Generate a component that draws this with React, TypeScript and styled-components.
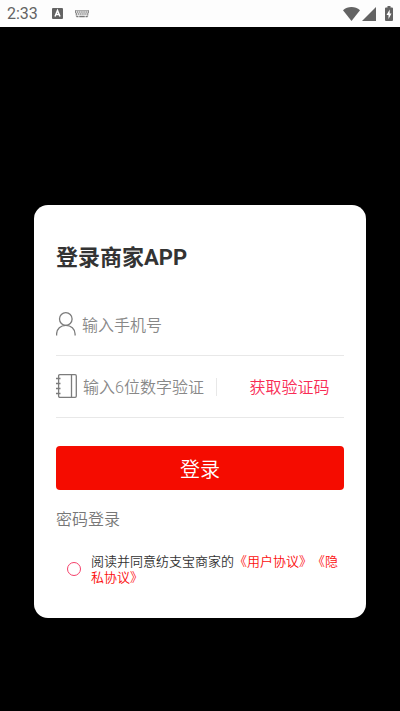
import React, { useState } from "react";
import styled, { createGlobalStyle } from "styled-components";

const GlobalStyle = createGlobalStyle`
  *, *::before, *::after { box-sizing: border-box; }
  body {
    margin: 0;
    background: #000;
    font-family: Roboto, "Noto Sans CJK SC", sans-serif;
    color: #333;
  }
  button, input { font-family: inherit; }
`;

const Screen = styled.div`
  min-height: 100vh;
  display: flex;
  flex-direction: column;
  background: #000;
`;

const StatusBar = styled.header`
  height: 27px;
  padding: 0 7px;
  display: flex;
  align-items: center;
  justify-content: space-between;
  background: #fdfdfd;
  color: #636363;
`;

const StatusGroup = styled.div<{ $gap: number }>`
  display: flex;
  align-items: center;
  gap: ${({ $gap }) => $gap}px;
`;

const Clock = styled.time`
  width: 33px;
  padding-top: 1px;
  font-size: 16px;
  line-height: 28px;
`;

const Card = styled.main`
  margin: 178px 34px 0;
  padding: 37px 22px 32px;
  border-radius: 14px;
  background: #fff;
`;

const Title = styled.h1`
  margin: 0 0 20px;
  font-size: 22px;
  line-height: 32px;
  font-weight: 700;
`;

const Field = styled.div`
  height: 62px;
  display: flex;
  align-items: center;
  gap: 6px;
  border-bottom: 1px solid #e8e8e8;
`;

const FieldLabel = styled.label`
  display: flex;
  flex: none;
  padding-bottom: 2px;
`;

const TextInput = styled.input`
  flex: 1;
  min-width: 0;
  height: 32px;
  padding: 2px 0 0;
  border: 0;
  outline: 0;
  background: transparent;
  color: #333;
  font-size: 16px;
  font-weight: 350;
  &::placeholder { color: #888; opacity: 1; }
`;

const CodeButton = styled.button`
  flex: none;
  height: 18px;
  width: 128px;
  padding: 0 0 0 18px;
  border: 0;
  border-left: 1px solid #e8e8e8;
  background: transparent;
  color: #f92c55;
  font-size: 16px;
  font-weight: 350;
  line-height: 20px;
`;

const SubmitButton = styled.button`
  display: block;
  width: 100%;
  height: 44px;
  margin-top: 28px;
  padding: 0;
  border: 0;
  border-radius: 4px;
  background: #f50c00;
  color: #fff;
  font-size: 20px;
  font-weight: 350;
`;

const ModeButton = styled.button`
  display: block;
  margin-top: 18px;
  padding: 0;
  border: 0;
  background: transparent;
  color: #777;
  font-size: 16px;
  font-weight: 350;
  line-height: 24px;
`;

const Agreement = styled.div`
  margin-top: 22px;
  padding-left: 11px;
  display: flex;
  align-items: flex-start;
  gap: 10px;
`;

const AgreeBox = styled.input`
  appearance: none;
  flex: none;
  width: 14px;
  height: 14px;
  margin: 8px 0 0;
  border: 1px solid #f5406a;
  border-radius: 50%;
  &:checked { background: #f5406a; }
`;

const AgreeText = styled.label`
  font-size: 13px;
  font-weight: 350;
  line-height: 16px;
  text-spacing-trim: space-all;
`;

const PolicyLink = styled.a`
  color: #fc0d0d;
  text-decoration: none;
`;

const KeyboardLetterIcon = () => (
  <svg width="11" height="11" viewBox="0 0 11 11" aria-hidden="true">
    <rect width="11" height="11" rx="1" fill="#636363" />
    <path d="M3 8.5 5.5 2.5 8 8.5M4 6.5h3" fill="none" stroke="#fff" strokeWidth="1.5" />
  </svg>
);

const KeyboardIcon = () => (
  <svg width="14" height="8" viewBox="0 0 14 8" fill="none" stroke="#777" aria-hidden="true">
    <path d="M0 .5h14" strokeWidth="1" stroke="#aaa" />
    <path d="M0 2h14" strokeWidth="1.4" strokeDasharray="1.3 .8" />
    <path d="M1 4h12" strokeWidth="1.400" strokeDasharray="1.300 .8" />
    <path d="M1.500 6.500h2M4.200 6.500h5.600M10.500 6.500h2" strokeWidth="1.300" />
    <path d="M.4 .5 1.500 7M13.600 .5 12.500 7" strokeWidth=".6" />
  </svg>
);

const WifiIcon = () => (
  <svg width="17" height="14" viewBox="0 0 17 14" aria-hidden="true">
    <path d="M8.500 14 0 3.200C2.400 1 5.400 0 8.500 0s6.100 1 8.500 3.200Z" fill="#636363" />
  </svg>
);

const SignalIcon = () => (
  <svg width="14" height="14" viewBox="0 0 14 14" aria-hidden="true">
    <path d="M14 0v14H0Z" fill="#636363" />
  </svg>
);

const BatteryIcon = () => (
  <svg width="8" height="15" viewBox="0 0 8 15" aria-hidden="true">
    <path d="M2.500 0h3v1.500H7a1 1 0 0 1 1 1V14a1 1 0 0 1-1 1H1a1 1 0 0 1-1-1V2.500a1 1 0 0 1 1-1h1.500Z" fill="#636363" />
    <path d="M4.700 3.500 1.500 9h2v4L6.500 7.500h-1.800Z" fill="#fff" />
  </svg>
);

const PersonIcon = () => (
  <svg width="20" height="24" viewBox="0 0 20 24" fill="none" stroke="#7c7c7c" strokeWidth="1.300" aria-hidden="true">
    <circle cx="9.800" cy="7" r="6.300" />
    <path d="M.6 23.500v-1.500C.8 17 4.500 13.400 9.800 13.400S18.900 17 19.100 22v1.500" />
  </svg>
);

const NotebookIcon = () => (
  <svg width="21" height="24" viewBox="0 0 21 24" fill="none" stroke="#7c7c7c" strokeWidth="1.300" aria-hidden="true">
    <rect x="2.600" y=".7" width="17.700" height="22.600" rx="1.200" />
    <path d="M15.500 .7v22.600M0 4.500h4.500M0 9.500h4.500M0 14.500h4.500M0 19.500h4.500" />
  </svg>
);

export default function App() {
  const [agreed, setAgreed] = useState(false);
  return (
    <Screen>
      <GlobalStyle />
      <StatusBar>
        <StatusGroup $gap={12}>
          <Clock>2:33</Clock>
          <KeyboardLetterIcon />
          <KeyboardIcon />
        </StatusGroup>
        <StatusGroup $gap={9}>
          <StatusGroup $gap={2}>
            <WifiIcon />
            <SignalIcon />
          </StatusGroup>
          <BatteryIcon />
        </StatusGroup>
      </StatusBar>
      <Card>
        <Title>登录商家APP</Title>
        <form onSubmit={(e) => e.preventDefault()}>
          <Field>
            <FieldLabel htmlFor="phone" aria-label="手机号">
              <PersonIcon />
            </FieldLabel>
            <TextInput id="phone" type="tel" placeholder="输入手机号" />
          </Field>
          <Field>
            <FieldLabel htmlFor="code" aria-label="验证码">
              <NotebookIcon />
            </FieldLabel>
            <TextInput id="code" inputMode="numeric" placeholder="输入6位数字验证" />
            <CodeButton type="button">获取验证码</CodeButton>
          </Field>
          <SubmitButton type="submit">登录</SubmitButton>
          <ModeButton type="button">密码登录</ModeButton>
          <Agreement>
            <AgreeBox
              id="agree"
              type="checkbox"
              checked={agreed}
              onChange={(e) => setAgreed(e.target.checked)}
            />
            <AgreeText htmlFor="agree">
              阅读并同意纺支宝商家的<PolicyLink href="#terms">《用户协议》</PolicyLink>
              <PolicyLink href="#privacy">《隐私协议》</PolicyLink>
            </AgreeText>
          </Agreement>
        </form>
      </Card>
    </Screen>
  );
}
